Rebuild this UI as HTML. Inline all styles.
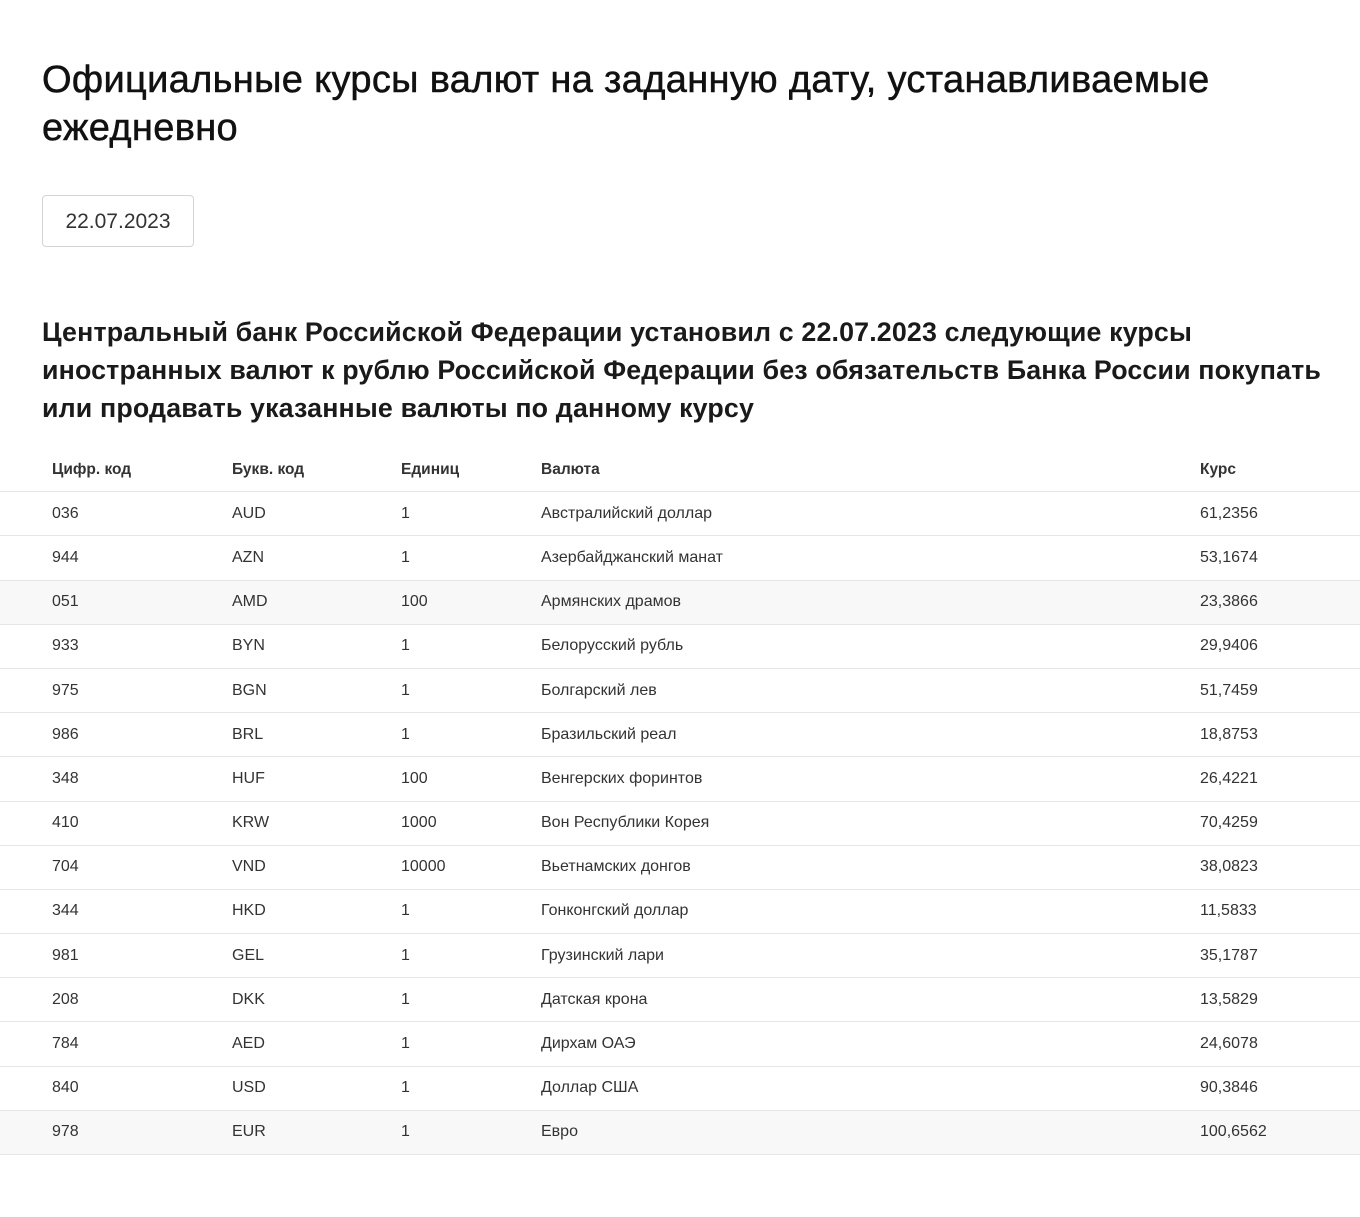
<!DOCTYPE html>
<html><head><meta charset="utf-8"><style>
body{margin:0;background:#fff;font-family:"Liberation Sans",sans-serif;color:#1f1f1f;width:1360px;height:1217px;overflow:hidden}
h1{position:absolute;left:42px;top:56px;margin:0;font-size:38px;font-weight:normal;line-height:48px;letter-spacing:0.33px;color:#111;white-space:nowrap;-webkit-text-stroke:0.5px #111}
.date{position:absolute;left:42px;top:195px;width:150px;height:50px;border:1px solid #d4d4d4;border-radius:4px;font-size:21px;line-height:52px;text-align:center;color:#333}
h2{position:absolute;left:42px;top:313px;margin:0;font-size:26.8px;font-weight:bold;line-height:38px;letter-spacing:0.15px;color:#1a1a1a;white-space:nowrap}
table{position:absolute;left:0;top:448px;width:1360px;border-collapse:collapse;font-size:16px;color:#333}
td,th{height:43.2px;padding:0;text-align:left;border-bottom:1px solid #e6e6e6}
th{font-weight:bold;color:#333;font-size:15.5px}
td:first-child,th:first-child{padding-left:52px;width:180px}
.c2{width:169px}.c3{width:140px}.c4{width:659px}
tr.g td{background:#f8f8f8}
</style></head><body>
<h1>Официальные курсы валют на заданную дату, устанавливаемые<br>ежедневно</h1>
<div class="date">22.07.2023</div>
<h2>Центральный банк Российской Федерации установил с 22.07.2023 следующие курсы<br>иностранных валют к рублю Российской Федерации без обязательств Банка России покупать<br>или продавать указанные валюты по данному курсу</h2>
<table>
<tr><th>Цифр. код</th><th class="c2">Букв. код</th><th class="c3">Единиц</th><th class="c4">Валюта</th><th>Курс</th></tr>
<tr><td>036</td><td>AUD</td><td>1</td><td>Австралийский доллар</td><td>61,2356</td></tr>
<tr><td>944</td><td>AZN</td><td>1</td><td>Азербайджанский манат</td><td>53,1674</td></tr>
<tr class="g"><td>051</td><td>AMD</td><td>100</td><td>Армянских драмов</td><td>23,3866</td></tr>
<tr><td>933</td><td>BYN</td><td>1</td><td>Белорусский рубль</td><td>29,9406</td></tr>
<tr><td>975</td><td>BGN</td><td>1</td><td>Болгарский лев</td><td>51,7459</td></tr>
<tr><td>986</td><td>BRL</td><td>1</td><td>Бразильский реал</td><td>18,8753</td></tr>
<tr><td>348</td><td>HUF</td><td>100</td><td>Венгерских форинтов</td><td>26,4221</td></tr>
<tr><td>410</td><td>KRW</td><td>1000</td><td>Вон Республики Корея</td><td>70,4259</td></tr>
<tr><td>704</td><td>VND</td><td>10000</td><td>Вьетнамских донгов</td><td>38,0823</td></tr>
<tr><td>344</td><td>HKD</td><td>1</td><td>Гонконгский доллар</td><td>11,5833</td></tr>
<tr><td>981</td><td>GEL</td><td>1</td><td>Грузинский лари</td><td>35,1787</td></tr>
<tr><td>208</td><td>DKK</td><td>1</td><td>Датская крона</td><td>13,5829</td></tr>
<tr><td>784</td><td>AED</td><td>1</td><td>Дирхам ОАЭ</td><td>24,6078</td></tr>
<tr><td>840</td><td>USD</td><td>1</td><td>Доллар США</td><td>90,3846</td></tr>
<tr class="g"><td>978</td><td>EUR</td><td>1</td><td>Евро</td><td>100,6562</td></tr>
</table>
</body></html>
